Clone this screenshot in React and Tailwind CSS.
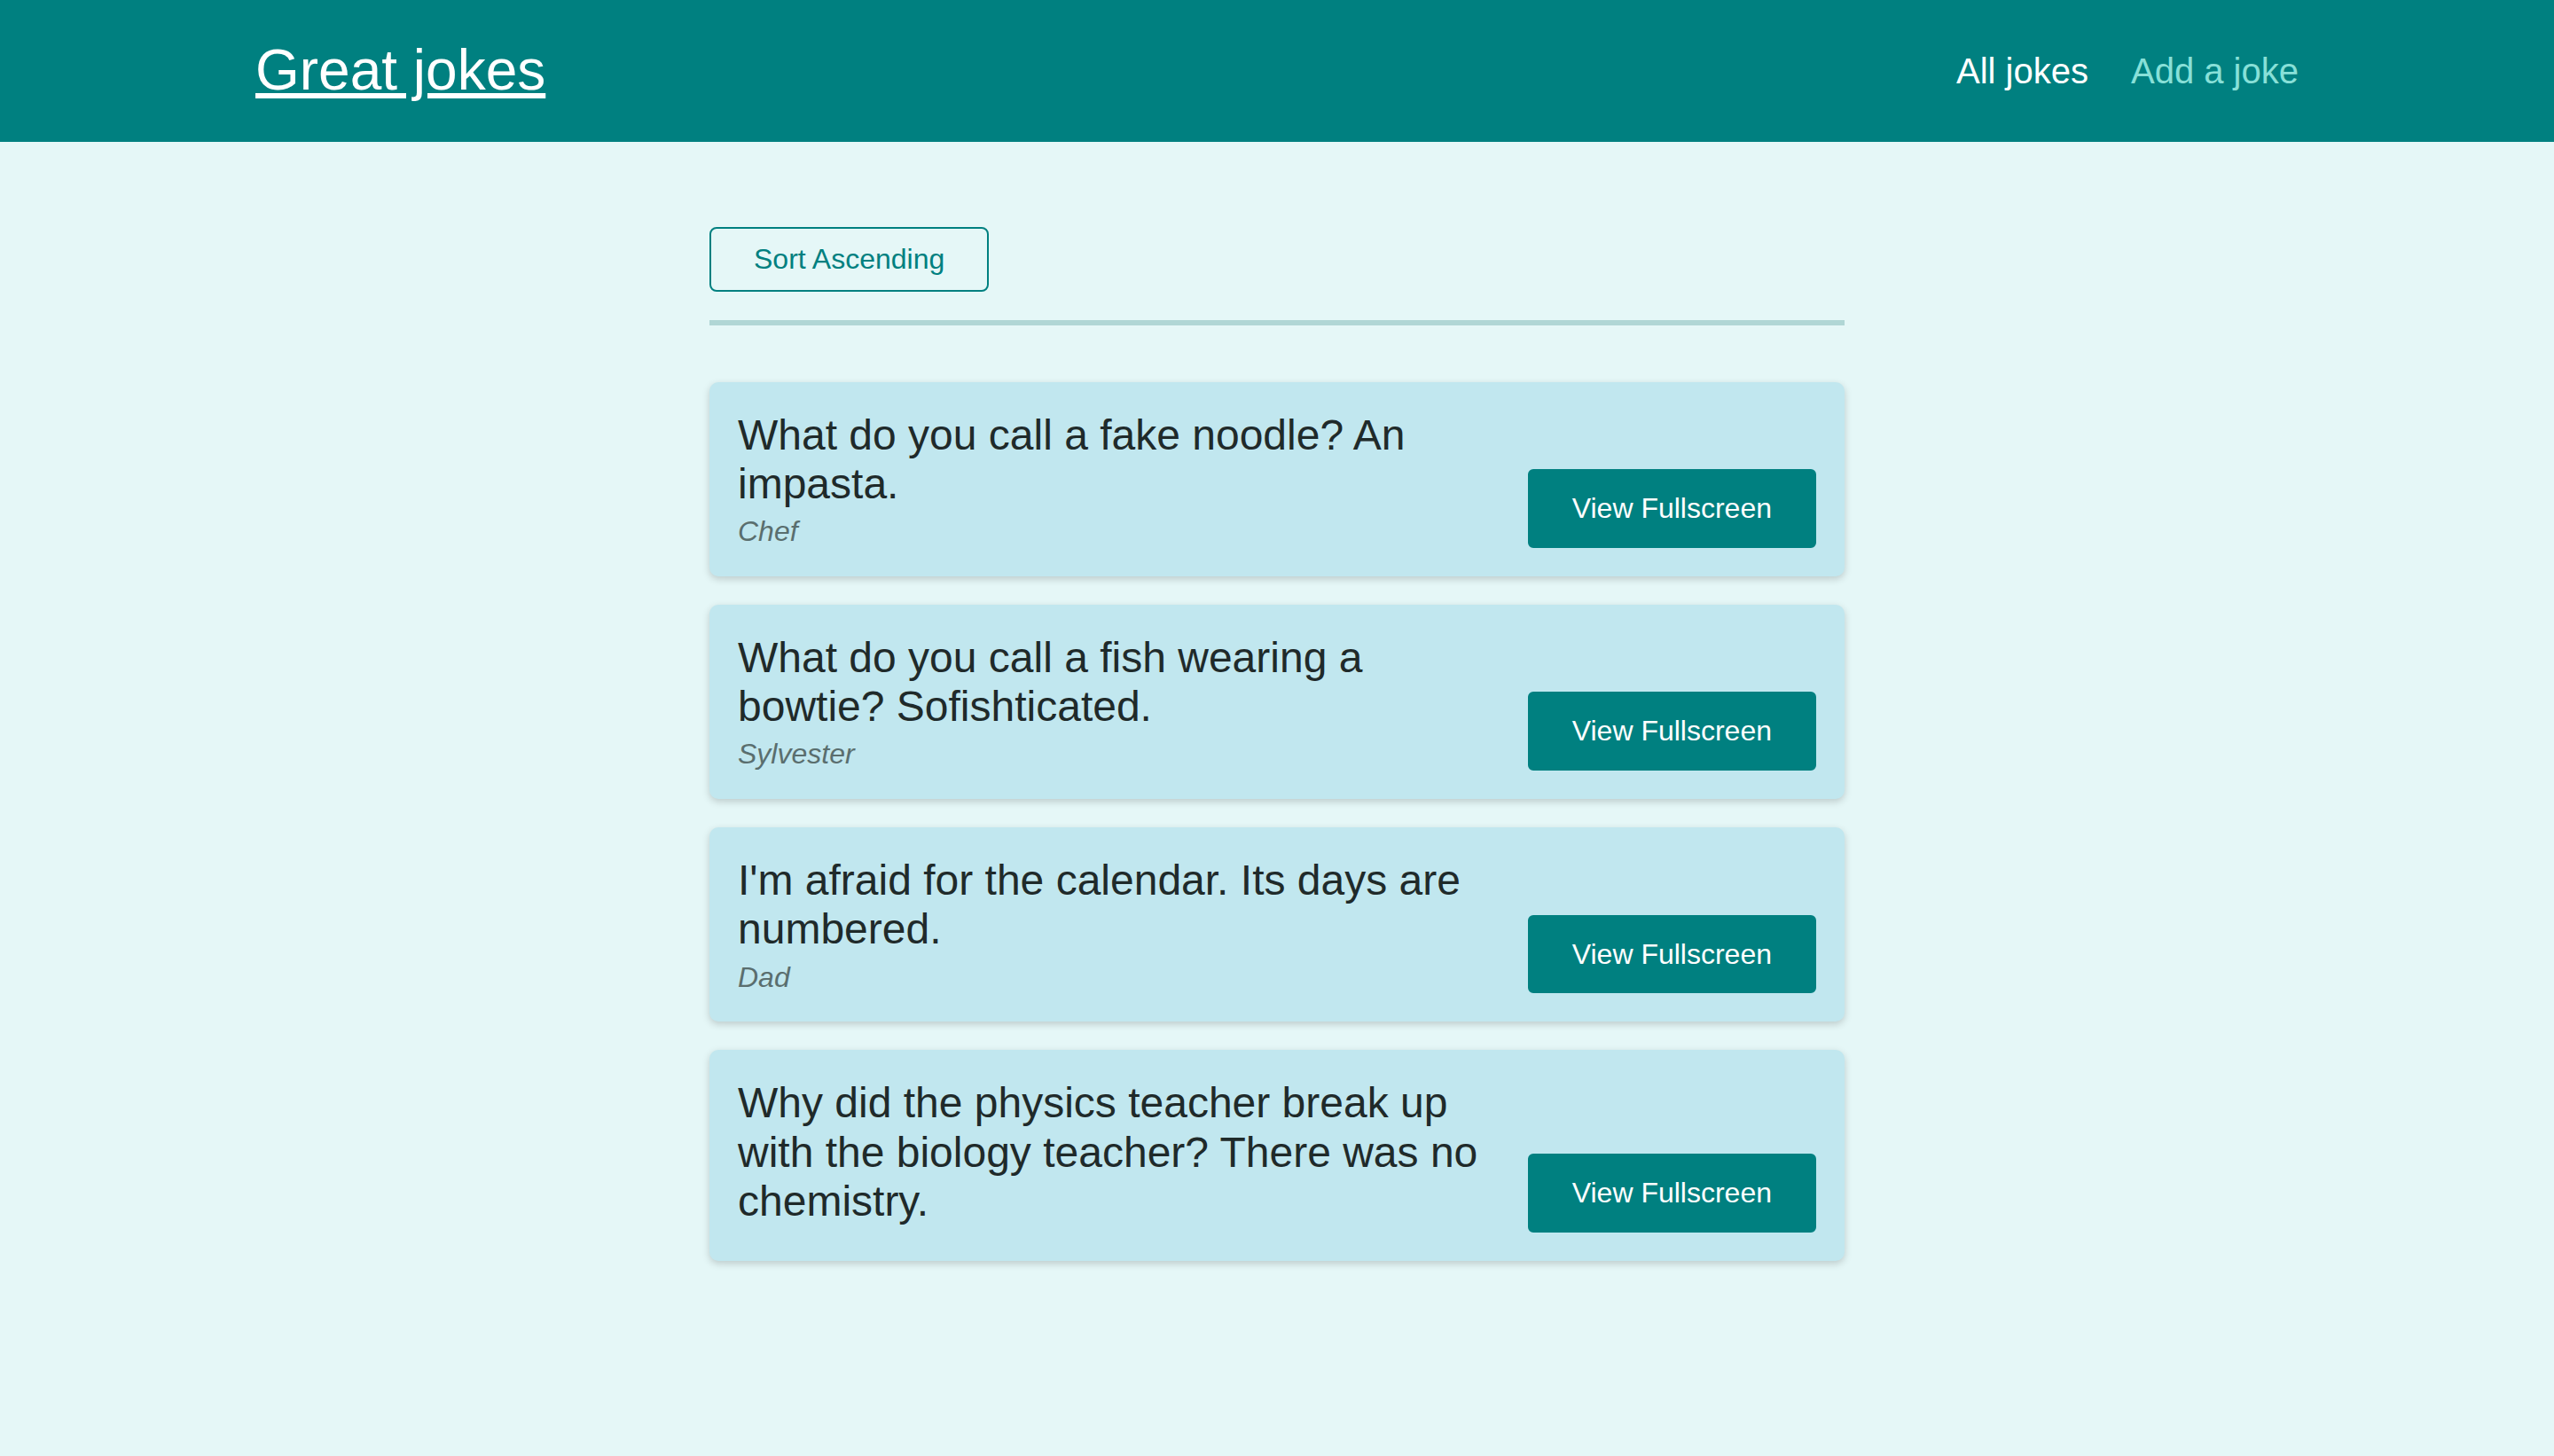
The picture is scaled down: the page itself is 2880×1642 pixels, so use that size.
import React from "react";

const jokes = [
  { text: "What do you call a fake noodle? An impasta.", author: "Chef" },
  { text: "What do you call a fish wearing a bowtie? Sofishticated.", author: "Sylvester" },
  { text: "I'm afraid for the calendar. Its days are numbered.", author: "Dad" },
  { text: "Why did the physics teacher break up with the biology teacher? There was no chemistry.", author: "" },
];

export default function App() {
  return (
    <div className="min-h-[1642px] bg-[#e5f7f7] font-['Liberation_Sans',Arial,sans-serif] leading-[1.15]">
      <header className="h-[160px] bg-[#008080]">
        <div className="mx-auto flex h-full w-[80%] items-center justify-between">
          <a href="#" className="text-[64px] text-white underline">Great jokes</a>
          <nav className="flex items-center gap-12 text-[40px]">
            <a href="#" className="text-white">All jokes</a>
            <a href="#" className="text-[#88e0d8]">Add a joke</a>
          </nav>
        </div>
      </header>
      <main className="mx-auto mt-[96px] w-[1280px]">
        <div>
          <button className="rounded-[8px] border-2 border-[#008080] bg-transparent px-12 py-4 text-[32px] text-[#008080]">
            Sort Ascending
          </button>
        </div>
        <hr className="mt-8 h-[6px] border-0 bg-[#b0d6d5]" />
        <ul className="mt-16 flex flex-col gap-8">
          {jokes.map((j, i) => (
            <li
              key={i}
              className="flex items-end justify-between gap-8 rounded-[10px] bg-[#c1e7ef] p-8 shadow-[0_3px_8px_rgba(0,0,0,0.18)]"
            >
              <figure className="min-w-0 flex-1">
                <blockquote className="text-[48px] text-[#1f2a2a]">{j.text}</blockquote>
                <figcaption className="mt-2 text-[32px] italic text-[#5a6e6e]">{j.author}</figcaption>
              </figure>
              <button className="shrink-0 rounded-[6px] border-2 border-[#008080] bg-[#008080] px-12 py-6 text-[32px] text-white">
                View Fullscreen
              </button>
            </li>
          ))}
        </ul>
      </main>
    </div>
  );
}
